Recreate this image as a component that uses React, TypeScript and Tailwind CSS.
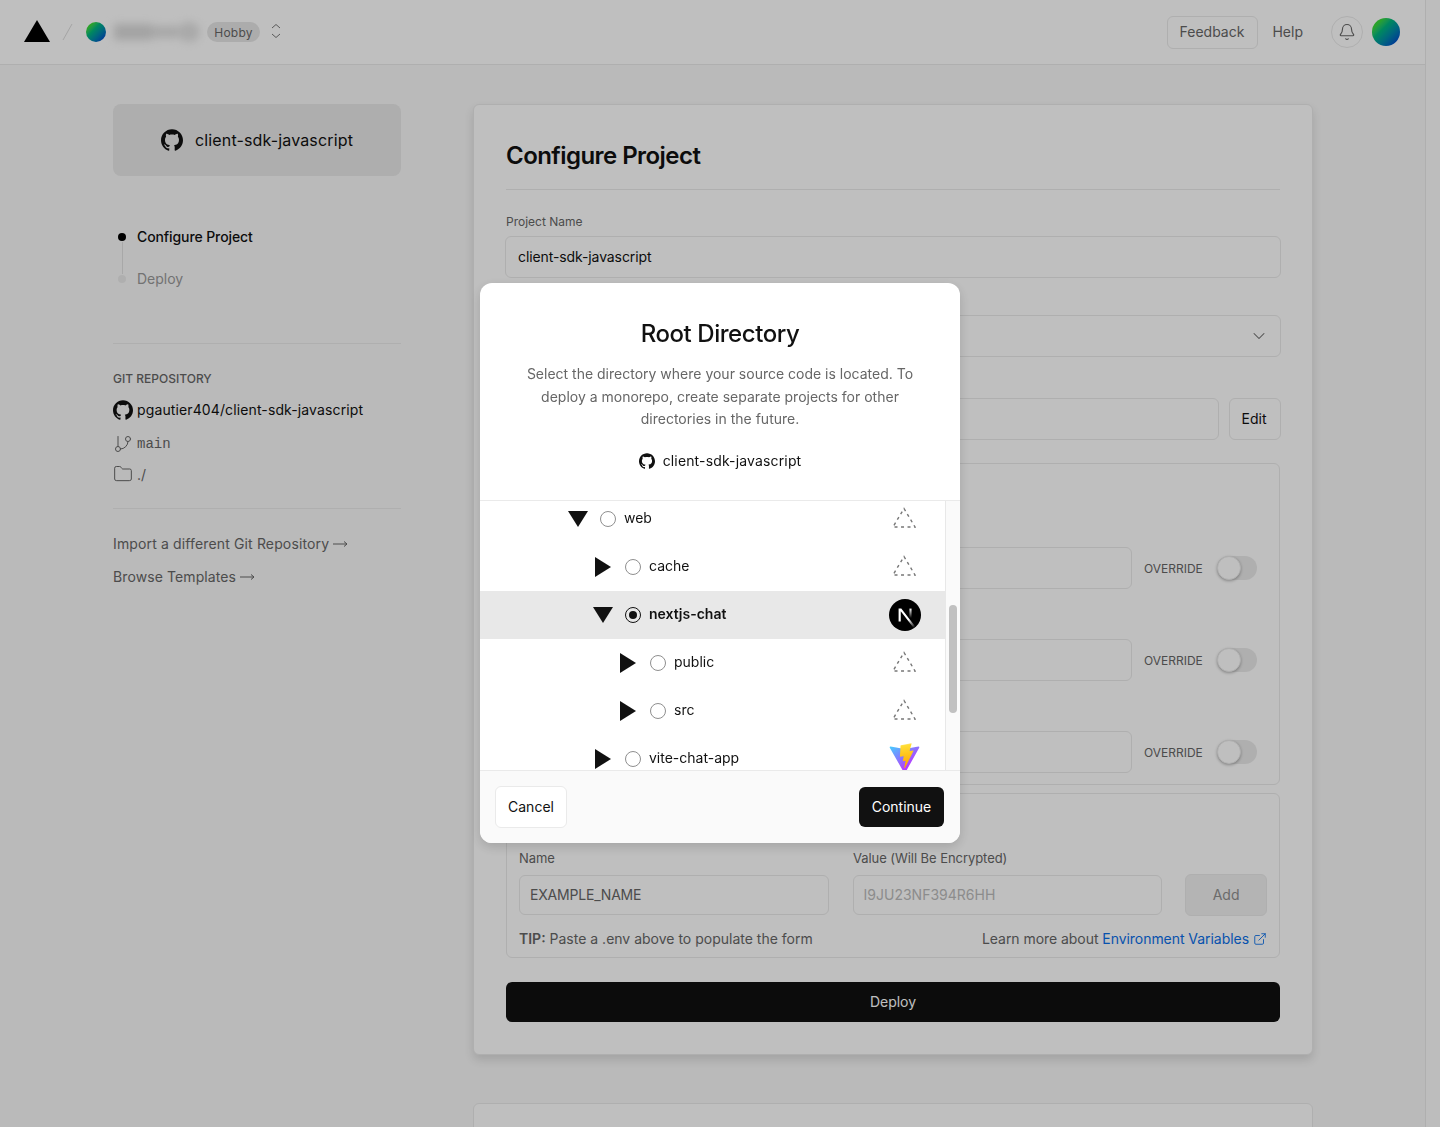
// Vercel-style "Configure Project" page with the Root Directory modal open

import { Bell, ChevronDown, ExternalLink, Folder, GitBranch } from 'lucide-react';
import { SiGithub } from 'react-icons/si';

const ROWS = [
  { name: 'web', depth: 0, open: true, icon: 'none' },
  { name: 'cache', depth: 1, open: false, icon: 'none' },
  { name: 'nextjs-chat', depth: 1, open: true, icon: 'next', selected: true },
  { name: 'public', depth: 2, open: false, icon: 'none' },
  { name: 'src', depth: 2, open: false, icon: 'none' },
  { name: 'vite-chat-app', depth: 1, open: false, icon: 'vite' },
];

const DEPTH_CLASS = ['pl-[88px]', 'pl-[113px]', 'pl-[138px]'];

function Avatar({ className }: { className: string }) {
  return <div className={`rounded-full bg-linear-to-br from-[#38d83a] from-20% to-[#0052c4] to-85% ${className}`} />;
}

function DashedTriangle() {
  return (
    <svg width="24" height="22" viewBox="0 0 24 22" fill="none" className="-mt-[3px] -ml-[2px]">
      <path d="M12 1.5 L23 20 L1 20 Z" stroke="#777" strokeWidth="1.4" strokeDasharray="3 3.5" />
    </svg>
  );
}

function NextLogo() {
  return (
    <svg width="32" height="32" viewBox="0 0 180 180" fill="none">
      <defs>
        <linearGradient id="next-a" x1="109" y1="116.5" x2="144.5" y2="160.5" gradientUnits="userSpaceOnUse">
          <stop stopColor="white" />
          <stop offset="1" stopColor="white" stopOpacity="0" />
        </linearGradient>
        <linearGradient id="next-b" x1="121" y1="54" x2="120.799" y2="106.875" gradientUnits="userSpaceOnUse">
          <stop stopColor="white" />
          <stop offset="1" stopColor="white" stopOpacity="0" />
        </linearGradient>
      </defs>
      <circle cx="90" cy="90" r="90" fill="black" />
      <path d="M149.508 157.52L69.142 54H54V125.97H66.1136V69.3836L139.999 164.845C143.333 162.614 146.509 160.165 149.508 157.52Z" fill="url(#next-a)" />
      <rect x="115" y="54" width="12" height="72" fill="url(#next-b)" />
    </svg>
  );
}

function ViteLogo() {
  return (
    <svg width="31" height="31" viewBox="0 0 410 404" fill="none" className="-mt-[2px] -ml-[1px]">
      <defs>
        <linearGradient id="vite-a" x1="6" y1="33" x2="235" y2="344" gradientUnits="userSpaceOnUse">
          <stop stopColor="#41D1FF" />
          <stop offset="1" stopColor="#BD34FE" />
        </linearGradient>
        <linearGradient id="vite-b" x1="194.651" y1="8.818" x2="236.076" y2="292.989" gradientUnits="userSpaceOnUse">
          <stop stopColor="#FFEA83" />
          <stop offset="0.0833" stopColor="#FFDD35" />
          <stop offset="1" stopColor="#FFA800" />
        </linearGradient>
      </defs>
      <path d="M399.641 59.5246L215.643 388.545C211.844 395.338 202.084 395.378 198.228 388.618L10.5817 59.5563C6.38087 52.1896 12.6802 43.2665 21.0281 44.7586L205.223 77.6824C206.398 77.8924 207.601 77.8904 208.776 77.6763L389.119 44.8058C397.439 43.2894 403.768 52.1434 399.641 59.5246Z" fill="url(#vite-a)" />
      <path d="M292.965 1.5744L156.801 28.2552C154.563 28.6937 152.906 30.5903 152.771 32.8664L144.395 174.33C144.198 177.662 147.258 180.248 150.51 179.498L188.42 170.749C191.967 169.931 195.172 173.055 194.443 176.622L183.18 231.775C182.422 235.487 185.907 238.661 189.532 237.56L212.947 230.446C216.577 229.344 220.065 232.527 219.297 236.242L201.398 322.875C200.278 328.294 207.486 331.249 210.492 326.603L212.5 323.5L323.454 102.072C325.312 98.3645 322.108 94.137 318.036 94.9228L279.014 102.454C275.347 103.161 272.227 99.746 273.262 96.1583L298.731 7.86689C299.767 4.27314 296.636 0.855181 292.965 1.5744Z" fill="url(#vite-b)" />
    </svg>
  );
}

function LongArrow() {
  return (
    <svg width="15" height="8" viewBox="0 0 15 8" fill="none" stroke="#666" strokeWidth="1" className="ml-1">
      <path d="M0 4 H14 M11 1.5 L14 4 L11 6.5" />
    </svg>
  );
}

function Caret({ open }: { open: boolean }) {
  return (
    <div className="flex w-5 shrink-0 items-center justify-center">
      {open ? (
        <svg width="20" height="16" viewBox="0 0 20 16">
          <path d="M0 0 H20 L10 16 Z" fill="#111" />
        </svg>
      ) : (
        <svg width="16" height="20" viewBox="0 0 16 20">
          <path d="M0 0 L16 10 L0 20 Z" fill="#111" />
        </svg>
      )}
    </div>
  );
}

function Radio({ selected }: { selected?: boolean }) {
  return (
    <div
      className={`ml-3 flex size-4 shrink-0 items-center justify-center rounded-full border ${
        selected ? 'border-[#111]' : 'border-[#8f8f8f]'
      }`}
    >
      {selected && <div className="size-2 rounded-full bg-[#111]" />}
    </div>
  );
}

function TreeRow({ row }: { row: (typeof ROWS)[number] }) {
  return (
    <div className={`flex h-12 items-center pr-6 ${DEPTH_CLASS[row.depth]} ${row.selected ? 'bg-[#e8e8e8]' : ''}`}>
      <Caret open={row.open} />
      <Radio selected={row.selected} />
      <span className={`ml-2 flex-1 pb-1 text-[14px] text-[#111] ${row.selected ? 'font-semibold' : ''}`}>{row.name}</span>
      <div className="flex size-8 items-center justify-center">
        {row.icon === 'none' && <DashedTriangle />}
        {row.icon === 'next' && <NextLogo />}
        {row.icon === 'vite' && <ViteLogo />}
      </div>
    </div>
  );
}

function RootDirectoryModal() {
  return (
    <div className="fixed inset-0 flex items-center justify-center bg-black/25 pb-px">
      <div className="flex h-[560px] w-[480px] flex-col overflow-hidden rounded-xl bg-white shadow-[0_4px_12px_rgba(0,0,0,0.15)]">
        <div className="h-[218px] shrink-0 border-b border-[#eaeaea] px-6 pt-[35px] text-center">
          <h2 className="text-[24px] leading-8 font-medium tracking-[-0.45px] text-[#111]">Root Directory</h2>
          <p className="mx-auto mt-[13px] w-[400px] text-[14px] leading-[22.5px] text-[#666]">
            Select the directory where your source code is located. To deploy a monorepo, create separate projects for
            other directories in the future.
          </p>
          <div className="mt-[20px] flex items-center justify-center gap-2 text-[14px] leading-5 text-[#111]">
            <SiGithub className="size-4" />
            <span className="tracking-[0.15px]">client-sdk-javascript</span>
          </div>
        </div>
        <div className="flex min-h-0 flex-1">
          <div className="min-w-0 flex-1 overflow-hidden">
            <div className="-mt-[6px]">
              {ROWS.map((row) => (
                <TreeRow key={row.name} row={row} />
              ))}
            </div>
          </div>
          <div className="w-[15px] shrink-0 border-l border-[#e8e8e8] bg-[#fafafa] pt-[104px] pl-[3px]">
            <div className="h-[108px] w-2 rounded-full bg-[#c1c1c1]" />
          </div>
        </div>
        <div className="flex h-[73px] shrink-0 items-center justify-between border-t border-[#eaeaea] bg-[#fafafa] pr-4 pl-[15px]">
          <button className="h-[42px] w-[72px] rounded-md border border-[#eaeaea] bg-white pb-[2px] text-[14px] text-[#111]">Cancel</button>
          <button className="h-10 w-[85px] rounded-md bg-[#111] pb-[2px] text-[14px] text-white">Continue</button>
        </div>
      </div>
    </div>
  );
}

function Header() {
  return (
    <header className="flex h-[65px] shrink-0 items-center border-b border-[#eaeaea] bg-white pr-[25px] pl-6">
      <svg width="26" height="22" viewBox="0 0 26 22" className="-mt-[2px]">
        <path d="M13 0 L26 22 H0 Z" fill="#000" />
      </svg>
      <svg width="12" height="18" viewBox="0 0 12 18" className="ml-[12px]">
        <path d="M10 1 L1 17" stroke="#dcdcdc" strokeWidth="1" />
      </svg>
      <Avatar className="ml-[12px] size-5" />
      <div className="ml-2 flex h-5 w-[86px] items-center blur-[4px]">
        <div className="h-4 w-[38px] bg-[#dadada]" />
        <div className="h-3 w-[26px] bg-[#e0e0e0]" />
        <div className="h-5 w-[22px] rounded-full bg-[#e2e2e2]" />
      </div>
      <span className="ml-[7px] flex h-5 w-[53px] items-center justify-center rounded-full bg-[#e6e6e6] pt-px text-[12px] tracking-[0.2px] text-[#666]">
        Hobby
      </span>
      <svg width="12" height="16" viewBox="0 0 12 16" fill="none" stroke="#777" strokeWidth="1" className="ml-[10px] -mt-[2px]">
        <path d="M2 5 L6 1.5 L10 5" />
        <path d="M2 11 L6 14.5 L10 11" />
      </svg>
      <div className="ml-auto flex h-[33px] w-[91px] items-center justify-center rounded-md border border-[#eaeaea] pr-[2px] pb-px text-[14px] text-[#666]">
        Feedback
      </div>
      <span className="ml-[14px] pb-px text-[14px] text-[#666]">Help</span>
      <div className="ml-[28px] flex size-8 items-center justify-center rounded-full border border-[#eaeaea] text-[#666]">
        <Bell className="size-[18px]" strokeWidth={1.5} />
      </div>
      <Avatar className="ml-[9px] size-7" />
    </header>
  );
}

function Sidebar() {
  return (
    <aside className="w-[288px] shrink-0">
      <div className="flex h-[72px] items-center justify-center gap-3 rounded-lg bg-[#e8e8e8] text-[16px] tracking-[0.15px] text-[#111]">
        <SiGithub className="size-[22px]" />
        <span>client-sdk-javascript</span>
      </div>

      <div className="mt-[51px] flex items-center pl-[5px]">
        <div className="size-2 rounded-full bg-black" />
        <span className="ml-[11px] text-[14px] leading-5 font-medium tracking-[-0.1px] text-[#111]">Configure Project</span>
      </div>
      <div className="-mt-[5px] ml-[9px] h-8 w-px bg-[#e0e0e0]" />
      <div className="-mt-[5px] flex items-center pl-[5px]">
        <div className="size-2 rounded-full bg-[#eaeaea]" />
        <span className="ml-[11px] text-[14px] leading-5 text-[#999]">Deploy</span>
      </div>

      <div className="mt-[54px] border-t border-[#eaeaea] pt-[27px]">
        <div className="text-[12px] leading-4 font-medium text-[#666] uppercase">Git Repository</div>
        <div className="mt-[13px] flex h-5 items-center gap-1 text-[14px] tracking-[0.12px] text-[#111]">
          <SiGithub className="size-5" />
          <span className="pb-[2px]">pgautier404/client-sdk-javascript</span>
        </div>
        <div className="mt-[14px] flex h-5 items-center gap-1 font-['Liberation_Mono',monospace] text-[14px] text-[#666]">
          <GitBranch className="size-5" strokeWidth={1.2} />
          <span>main</span>
        </div>
        <div className="mt-[10px] flex h-5 items-center gap-1 text-[14px] text-[#666]">
          <Folder className="size-5" strokeWidth={1.2} />
          <span>./</span>
        </div>
      </div>

      <div className="mt-6 border-t border-[#eaeaea] pt-[25px] text-[14px] text-[#666]">
        <div className="flex h-5 items-center tracking-[0.14px]">
          <span className="pb-[2px]">Import a different Git Repository</span>
          <LongArrow />
        </div>
        <div className="mt-[13px] flex h-5 items-center tracking-[0.1px]">
          <span className="pb-[2px]">Browse Templates</span>
          <LongArrow />
        </div>
      </div>
    </aside>
  );
}

function OverrideRow() {
  return (
    <div className="flex items-center">
      <div className="h-[42px] w-[613px] rounded-md border border-[#eaeaea]" />
      <span className="ml-3 pt-[2px] text-[12px] text-[#666]">OVERRIDE</span>
      <div className="ml-[14px] h-6 w-10 rounded-full bg-[#eaeaea]">
        <div className="size-6 rounded-full border border-[#eaeaea] bg-white shadow-[0_1px_3px_rgba(0,0,0,0.3)]" />
      </div>
    </div>
  );
}

function ProjectCard() {
  return (
    <div className="rounded-md border border-[#eaeaea] bg-white px-8 pt-[35px] pb-8 shadow-[0_5px_10px_rgba(0,0,0,0.12)]">
      <h1 className="h-8 text-[24px] leading-8 font-semibold tracking-[-0.55px] text-[#111]">Configure Project</h1>
      <div className="mt-[17px] border-t border-[#eaeaea]" />

      <div className="mt-6 h-4 text-[12px] leading-4 text-[#666]">Project Name</div>
      <div className="-mx-px mt-[6px] flex h-[42px] items-center rounded-md border border-[#eaeaea] px-3 pb-px text-[14px] tracking-[-0.1px] text-[#111]">
        client-sdk-javascript
      </div>

      <div className="-mx-px mt-[37px] flex h-[42px] items-center justify-end rounded-md border border-[#eaeaea] pr-[11px] text-[#666]">
        <ChevronDown className="size-5" strokeWidth={1.25} />
      </div>

      <div className="mt-[41px] -mr-px flex h-[42px] gap-[10px]">
        <div className="flex-1 rounded-md border border-[#eaeaea]" />
        <div className="flex w-[52px] items-center justify-center rounded-md border border-[#eaeaea] pr-[2px] pb-px text-[14px] text-[#111]">Edit</div>
      </div>

      <div className="mt-[23px] flex h-[322px] flex-col gap-[50px] rounded-md border border-[#eaeaea] pt-[83px] pl-[12px]">
        <OverrideRow />
        <OverrideRow />
        <OverrideRow />
      </div>

      <div className="mt-[8px] h-[165px] rounded-md border border-[#eaeaea] px-3 pt-[55px]">
        <div className="flex h-[18px] gap-6 text-[13px] leading-[18px] tracking-[-0.06px] text-[#666]">
          <span className="w-[310px]">Name</span>
          <span>Value (Will Be Encrypted)</span>
        </div>
        <div className="mt-[7px] flex h-[42px] items-center">
          <div className="flex h-10 w-[310px] items-center rounded-md border border-[#eaeaea] px-[10px] pb-px text-[14px] tracking-[-0.2px] text-[#666]">
            EXAMPLE_NAME
          </div>
          <div className="ml-6 flex h-10 w-[310px] items-center rounded-md border border-[#eaeaea] px-[10px] pb-px text-[14px] text-[#bbb]">
            I9JU23NF394R6HH
          </div>
          <div className="ml-[23px] flex h-[42px] w-[82px] items-center justify-center rounded-md border border-[#eaeaea] bg-[#f0f0f0] pb-px text-[14px] text-[#8f8f8f]">
            Add
          </div>
        </div>
        <div className="mt-[12px] flex h-5 items-center justify-between text-[14px] text-[#666]">
          <span>
            <b className="font-semibold">TIP:</b> Paste a .env above to populate the form
          </span>
          <span className="flex items-center tracking-[-0.05px]">
            Learn more about&nbsp;<span className="text-[#0a6ee8]">Environment Variables</span>
            <ExternalLink className="mt-px ml-[4px] size-[14px] text-[#0a6ee8]" strokeWidth={1.5} />
          </span>
        </div>
      </div>

      <div className="mt-6 flex h-10 items-center justify-center rounded-md bg-[#111] pb-px text-[14px] text-white">Deploy</div>
    </div>
  );
}

export default function App() {
  return (
    <div className="flex h-[1127px] overflow-hidden bg-white font-['Inter',sans-serif]">
      <div className="flex w-[1425px] shrink-0 flex-col bg-[#f8f8f8]">
        <Header />
        <main className="flex gap-[72px] pt-[39px] pl-[113px]">
          <Sidebar />
          <div className="w-[840px] shrink-0">
            <ProjectCard />
            <div className="mt-[48px] h-10 rounded-md border border-[#eaeaea] bg-white" />
          </div>
        </main>
      </div>
      <div className="flex-1 border-l border-[#eaeaea] bg-[#fdfdfd]" />
      <RootDirectoryModal />
    </div>
  );
}
